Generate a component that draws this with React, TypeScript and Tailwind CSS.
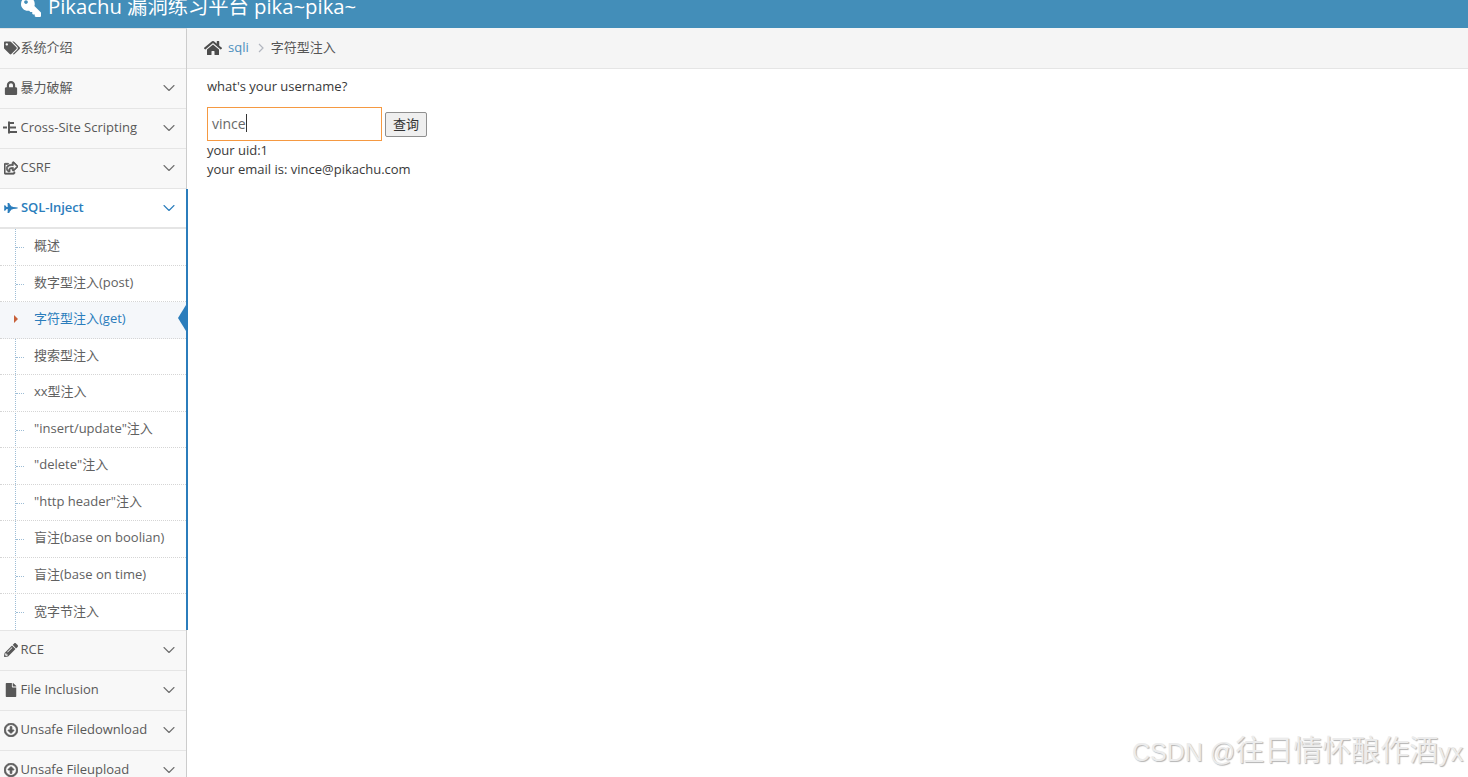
import React from "react";
import { FaTags, FaLock, FaRegShareSquare, FaFighterJet, FaPencilAlt, FaFile, FaRegArrowAltCircleDown, FaRegArrowAltCircleUp, FaHome, FaKey } from "react-icons/fa";
import { FiChevronDown } from "react-icons/fi";

const XssIcon = () => (
  <svg width="14" height="13" viewBox="0 0 14 13" fill="currentColor" className="-ml-px">
    <rect x="0" y="5.5" width="4" height="2" />
    <rect x="5" y="0.5" width="2" height="12" />
    <rect x="7" y="1" width="4" height="2" />
    <rect x="7" y="5.5" width="6" height="2" />
    <rect x="7" y="10" width="7" height="2" />
  </svg>
);

const top = [
  { icon: <FaTags size={16} />, label: "系统介绍", chev: false },
  { icon: <FaLock size={14} />, label: "暴力破解", chev: true },
  { icon: <XssIcon />, label: "Cross-Site Scripting", chev: true },
  { icon: <FaRegShareSquare size={14} stroke="currentColor" strokeWidth={30} />, label: "CSRF", chev: true },
];
const bottom = [
  { icon: <FaPencilAlt size={14} />, label: "RCE" },
  { icon: <FaFile size={14} />, label: "File Inclusion" },
  { icon: <FaRegArrowAltCircleDown size={14} stroke="currentColor" strokeWidth={30} />, label: "Unsafe Filedownload" },
  { icon: <FaRegArrowAltCircleUp size={14} stroke="currentColor" strokeWidth={30} />, label: "Unsafe Fileupload" },
];
const subs = ["概述", "数字型注入(post)", "字符型注入(get)", "搜索型注入", "xx型注入", "\"insert/update\"注入", "\"delete\"注入", "\"http header\"注入", "盲注(base on boolian)", "盲注(base on time)", "宽字节注入"];

const Row = ({ icon, label, chev = true }: { icon: React.ReactNode; label: string; chev?: boolean }) => (
  <div className="h-[40px] shrink-0 flex items-center bg-[#f8f8f8] border-b border-[#e5e5e5] text-[#585858] pl-[4px] pr-[7px] pb-[2px] text-[13px]">
    <span className="w-[16.5px] flex items-center shrink-0">{icon}</span>
    <span className="flex-1 whitespace-nowrap">{label}</span>
    {chev && <FiChevronDown size={20} strokeWidth={1.3} className="text-[#6f6f6f] shrink-0" />}
  </div>
);

export default function App() {
  return (
    <div className="h-[777px] w-[1468px] overflow-hidden flex flex-col relative bg-white text-[13px] text-[#393939]" style={{ fontFamily: '"Open Sans","Noto Sans CJK SC",sans-serif' }}>
      <header className="h-[28px] shrink-0 bg-[#438eb9] overflow-hidden text-white flex items-start pl-[21px]">
        <div className="flex items-center h-[12px] text-[20.3px] whitespace-nowrap">
          <FaKey size={20} className="mr-[7px] mt-[2px] -scale-x-100" />
          <span>Pikachu 漏洞练习平台 pika~pika~</span>
        </div>
      </header>
      <div className="flex flex-1 min-h-0">
        <aside className="w-[187px] shrink-0 bg-[#f2f2f2] border-r border-t border-[#cccccc] border-t-[#e5e5e5] flex flex-col">
          {top.map((t) => <Row key={t.label} icon={t.icon} label={t.label} chev={t.chev} />)}
          <div className="relative border-r-2 border-[#2b7dbc] -mr-[2px] shrink-0 bg-white">
            <div className="h-[40px] flex items-center border-b-2 border-[#e5e5e5] text-[#2b7dbc] font-semibold tracking-[-0.1px] pl-[4px] pr-[7px] pb-[1px]">
              <span className="w-[17px] flex items-center shrink-0"><FaFighterJet size={14} /></span>
              <span className="flex-1">SQL-Inject</span>
              <FiChevronDown size={20} strokeWidth={1.3} className="shrink-0" />
            </div>
            <ul className="relative h-[401px]">
              <li className="absolute left-[15px] top-0 bottom-0 border-l border-dotted border-[#9dbdd6]" aria-hidden />
              {subs.map((s, i) => {
                const active = i === 2;
                return (
                  <li key={s} className={`h-[36.5px] flex items-center pl-[34px] pb-[1.5px] relative whitespace-nowrap ${i < subs.length - 1 ? "border-b border-dotted border-[#d5d5d5]" : ""} ${active ? "bg-[#f5f7fa] text-[#2b7dbc]" : "text-[#616161]"}`}>
                    {active ? (
                      <span className="absolute left-[14px] top-[13px] w-0 h-0 border-y-[4px] border-y-transparent border-l-[4px] border-l-[#c86139]" />
                    ) : (
                      <span className="absolute left-[16px] top-[18px] w-[8px] border-t border-dotted border-[#9dbdd6]" />
                    )}
                    {s}
                    {active && <span className="absolute right-0 top-[3px] w-0 h-0 border-y-[13px] border-y-transparent border-r-[8px] border-r-[#2b7dbc]" />}
                  </li>
                );
              })}
            </ul>
          </div>
          <div className="border-t border-[#e5e5e5] shrink-0">
            {bottom.map((t) => <Row key={t.label} icon={t.icon} label={t.label} />)}
          </div>
        </aside>
        <main className="flex-1 min-w-0">
          <div className="h-[41px] bg-[#f5f5f5] border-b border-[#e5e5e5] flex items-center pl-[17px] text-[#555]">
            <FaHome size={18} className="text-[#4c4c4c] mr-[6px]" />
            <a className="text-[#4c8fbd]">sqli</a>
            <span className="text-[#b2b6bf] ml-[9px] mr-[7px] text-[14px] leading-none">
              <svg width="6" height="10" viewBox="0 0 6 10" fill="none" stroke="currentColor" strokeWidth="1.2"><path d="M1 1l4 4-4 4" /></svg>
            </span>
            <span>字符型注入</span>
          </div>
          <div className="pl-[20px] pt-[8px]">
            <p className="h-[19px] leading-[19px]">what's your username?</p>
            <div className="flex items-end mt-[11px] h-[34px]">
              <div className="w-[175px] h-[34px] border border-[#f59942] flex items-center pl-[4px] pb-[2px] text-[14px] text-[#696969]">
                vince<span className="w-px h-[18px] bg-[#333]" />
              </div>
              <button className="ml-[3px] w-[42px] h-[25px] mb-[4px] border border-[#8f8f8f] rounded-[2px] bg-[#efefef] text-[#333] text-[13px]">查询</button>
            </div>
            <p className="h-[19px] leading-[19px]">your uid:1</p>
            <p className="h-[19px] leading-[19px]">your email is: vince@pikachu.com</p>
          </div>
        </main>
      </div>
      <div className="absolute left-[1132px] top-[733px] text-[25px] leading-[36px] whitespace-nowrap text-[#ececec] [text-shadow:1px_1px_1px_#b4b4b4]" style={{ fontFamily: '"Liberation Sans","Noto Sans CJK SC",sans-serif' }}>
        CSDN @<span className="text-[29px]">往日情怀酿作酒</span>yx
      </div>
    </div>
  );
}
